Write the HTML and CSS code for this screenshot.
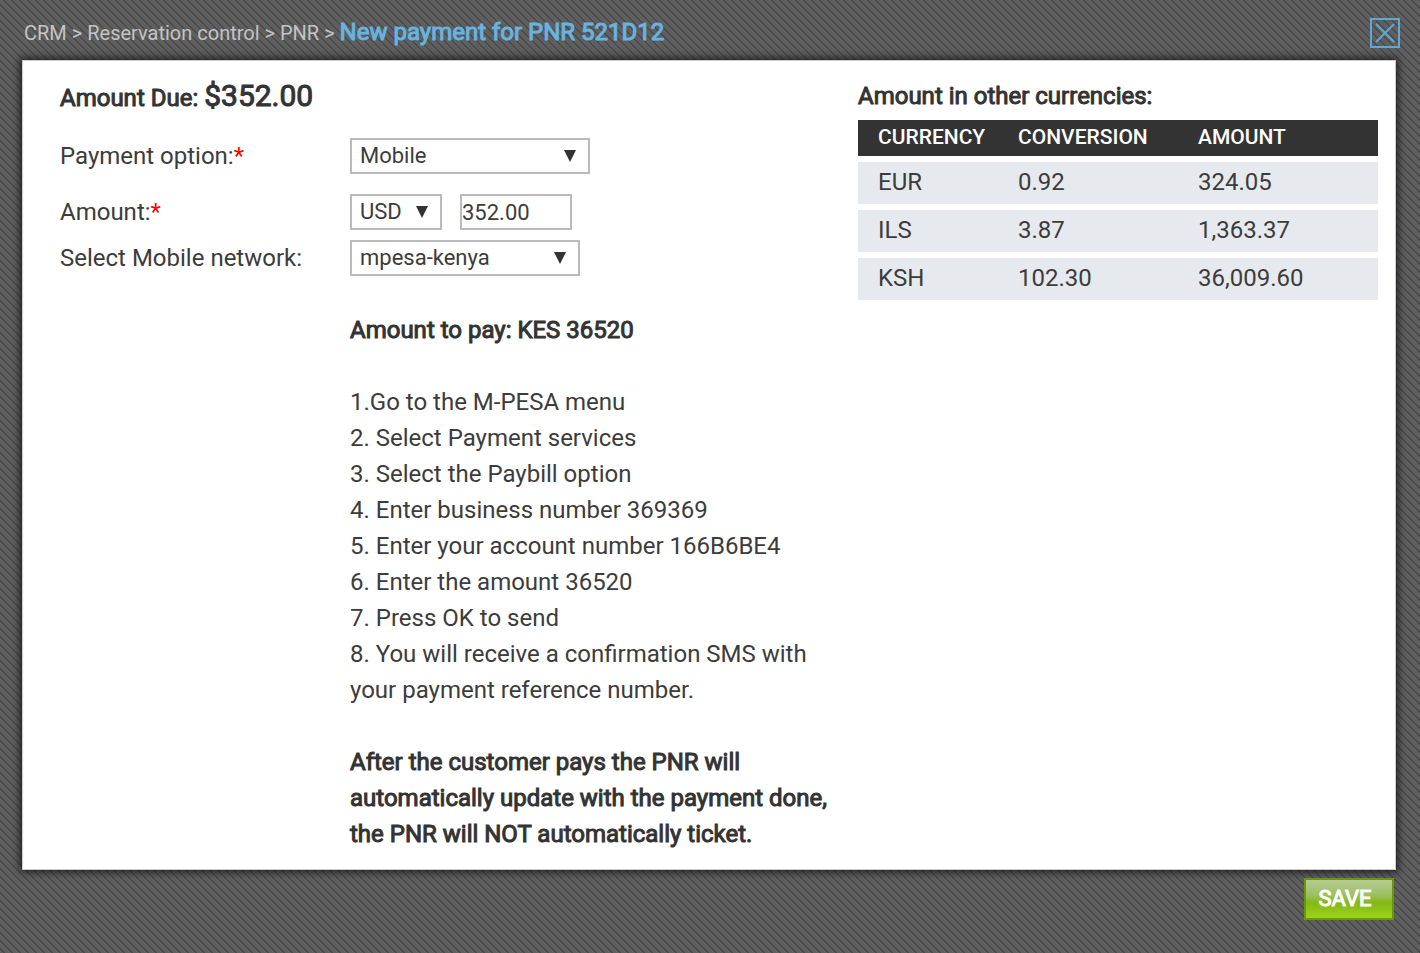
FILE: index.html
```html
<!DOCTYPE html>
<html lang="en">
<head>
<meta charset="utf-8">
<title>New payment for PNR 521D12</title>
<link rel="stylesheet" href="styles.css">
</head>
<body>
<header class="topbar">
  <nav class="breadcrumb" aria-label="Breadcrumb">
    <a href="#">CRM</a> &gt; <a href="#">Reservation control</a> &gt; <a href="#">PNR</a> &gt;
    <h1 class="title">New payment for PNR 521D12</h1>
  </nav>
  <button class="close" type="button" aria-label="Close">
    <svg viewBox="0 0 30 30" width="30" height="30" aria-hidden="true">
      <rect x="1" y="1" width="28" height="28"/>
      <path d="M6 6 24 24M24 6 6 24"/>
    </svg>
  </button>
</header>
<form class="payment" id="payment">
  <main class="panel">
    <section class="details">
      <h2 class="due">Amount Due: <span class="due-value">$352.00</span></h2>
      <div class="row row-option">
        <label for="option">Payment option:<span class="required">*</span></label>
        <span class="select select-option"><select id="option"><option>Mobile</option></select></span>
      </div>
      <div class="row row-amount">
        <label for="amount">Amount:<span class="required">*</span></label>
        <span class="select select-currency"><select aria-label="Currency"><option>USD</option></select></span>
        <input class="amount" id="amount" type="text" value="352.00">
      </div>
      <div class="row">
        <label for="network">Select Mobile network:</label>
        <span class="select select-network"><select id="network"><option>mpesa-kenya</option></select></span>
      </div>
      <div class="instructions">
        <p class="strong">Amount to pay: KES 36520</p>
        <p>1.Go to the M-PESA menu<br>2. Select Payment services<br>3. Select the Paybill option<br>4. Enter business number 369369<br>5. Enter your account number 166B6BE4<br>6. Enter the amount 36520<br>7. Press OK to send<br>8. You will receive a confirmation SMS with your payment reference number.</p>
        <p class="strong">After the customer pays the PNR will automatically update with the payment done, the PNR will NOT automatically ticket.</p>
      </div>
    </section>
    <section class="currencies">
      <h2 class="currencies-title">Amount in other currencies:</h2>
      <table class="rates">
        <thead><tr><th class="col-currency">CURRENCY</th><th class="col-conversion">CONVERSION</th><th>AMOUNT</th></tr></thead>
        <tbody>
          <tr><td>EUR</td><td>0.92</td><td>324.05</td></tr>
          <tr><td>ILS</td><td>3.87</td><td>1,363.37</td></tr>
          <tr><td>KSH</td><td>102.30</td><td>36,009.60</td></tr>
        </tbody>
      </table>
    </section>
  </main>
  <div class="actions"><button class="save" type="submit">SAVE</button></div>
</form>
</body>
</html>
```
FILE: styles.css
```css
* { box-sizing: border-box; }

body {
  margin: 0;
  min-height: 100vh;
  background: linear-gradient(45deg, #5f5f5f 0 12.5%, #4b4b4b 12.5% 25%, #5f5f5f 25% 62.5%, #4b4b4b 62.5% 75%, #5f5f5f 75%) 0 0 / 8px 8px #585858;
  color: #3c3c3c;
  font-family: Roboto, "Liberation Sans", sans-serif;
  font-size: 24px;
  line-height: 36px;
}

h1, h2, p { margin: 0; }

.topbar {
  display: flex;
  justify-content: space-between;
  align-items: flex-start;
  height: 60px;
  padding: 14px 20px 0 24px;
}

.breadcrumb { color: #c4c4c4; font-size: 20px; }
.breadcrumb a { color: inherit; text-decoration: none; }

.title {
  display: inline;
  color: #68b4e0;
  font-size: 24px;
  font-weight: 400;
  -webkit-text-stroke: 1px #68b4e0;
}

.close {
  width: 30px;
  height: 30px;
  margin-top: 4px;
  padding: 0;
  border: 0;
  background: none;
  cursor: pointer;
}

.close svg { display: block; fill: none; stroke: #5fa8d3; stroke-width: 2; }

.panel {
  display: flex;
  justify-content: space-between;
  margin: 0 24px 0 22px;
  padding: 18px 18px 18px 38px;
  background: #fff;
  box-shadow: 0 0 8px 2px #1c1c1c, inset 0 0 0 1px #ccc;
}

.due, .currencies-title { color: #333; font-size: 24px; font-weight: 400; }
.strong { color: #333; }
.due, .currencies-title, .strong { -webkit-text-stroke: 1px #333; }
.due { height: 36px; margin-bottom: 24px; }
.due-value { font-size: 30px; }

.row { display: flex; align-items: center; }
.row label { width: 290px; }
.row-option { margin-bottom: 20px; }
.row-amount { margin-bottom: 10px; }
.required { color: #f00; }

.select { position: relative; display: block; height: 36px; }
.select::after {
  content: "";
  position: absolute;
  right: 14px;
  top: 12px;
  border: 6px solid transparent;
  border-top: 12px solid #333;
  border-bottom: 0;
  pointer-events: none;
}

.select select {
  display: block;
  width: 100%;
  height: 36px;
  padding: 0 8px;
  border: 2px solid #bbb;
  border-radius: 0;
  appearance: none;
  background: #fff;
  color: #3c3c3c;
  font: 22px/32px Roboto, "Liberation Sans", sans-serif;
}

.select-option { width: 240px; }
.select-currency { width: 92px; margin-right: 18px; }
.select-network { width: 230px; }

.amount {
  width: 112px;
  height: 36px;
  padding: 0;
  border: 2px solid #bbb;
  background: #fff;
  color: #3c3c3c;
  font: 22px/32px Roboto, "Liberation Sans", sans-serif;
}

.instructions { width: 480px; margin: 36px 0 0 290px; }
.instructions p + p { margin-top: 36px; }

.currencies { width: 520px; }
.currencies-title { margin-bottom: 6px; }

.rates { width: 100%; border-collapse: separate; border-spacing: 0; table-layout: fixed; text-align: left; }
.rates th, .rates td { padding: 0 0 2px 20px; }
.rates th {
  height: 36px;
  background: #333;
  color: #fff;
  font-size: 21px;
  font-weight: 500;
  line-height: 34px;
}
.rates td {
  height: 48px;
  border-top: 6px solid #fff;
  background: #e6e9ee;
}
.rates .col-currency { width: 140px; }
.rates .col-conversion { width: 180px; }

.actions { display: flex; justify-content: flex-end; padding: 8px 26px 0 0; }

.save {
  width: 90px;
  height: 42px;
  padding: 0 8px 0 0;
  border: 2px solid #6a9608;
  background: linear-gradient(#b4cb96, #9dc060 40%, #84b813 60%, #9cd41c);
  color: #fff;
  font: 22px/36px Roboto, "Liberation Sans", sans-serif;
  -webkit-text-stroke: 1px #fff;
  cursor: pointer;
}
```
